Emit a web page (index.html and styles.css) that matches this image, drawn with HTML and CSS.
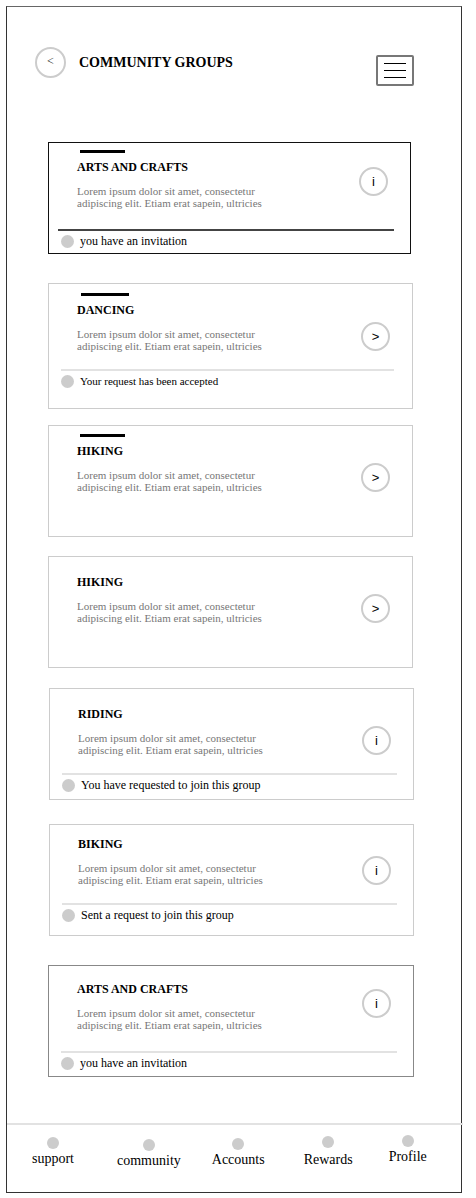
FILE: index.html
```html
<!DOCTYPE html>
<html lang="en">
<head>
    <meta charset="UTF-8">
    <meta name="viewport" content="width=device-width, initial-scale=1.0">
    <title>Community Groups</title>
    <link rel="stylesheet" href="styles.css">
</head>
<body>
    <div class="frame">
        <div class="header">
            <div class="back-btn">&lt;</div>
            <h1 class="page-title">COMMUNITY GROUPS</h1>
            <div class="menu-btn">
                <span></span>
                <span></span>
                <span></span>
            </div>
        </div>

        <div class="group-list">
            <div class="card card-dark">
                <div class="card-main">
                    <div class="card-text">
                        <div class="accent"></div>
                        <h2 class="card-title">ARTS AND CRAFTS</h2>
                        <p class="card-desc">Lorem ipsum dolor sit amet, consectetur<br>adipiscing elit. Etiam erat sapein, ultricies</p>
                    </div>
                    <div class="round-btn btn-high">i</div>
                </div>
                <div class="card-status status-dark">
                    <span class="dot"></span>
                    <span>you have an invitation</span>
                </div>
            </div>

            <div class="card card-tall gap-wide">
                <div class="card-main">
                    <div class="card-text">
                        <div class="accent"></div>
                        <h2 class="card-title">DANCING</h2>
                        <p class="card-desc">Lorem ipsum dolor sit amet, consectetur<br>adipiscing elit. Etiam erat sapein, ultricies</p>
                    </div>
                    <div class="round-btn">&gt;</div>
                </div>
                <div class="card-status status-small">
                    <span class="dot"></span>
                    <span>Your request has been accepted</span>
                </div>
            </div>

            <div class="card gap-tight">
                <div class="card-main">
                    <div class="card-text">
                        <div class="accent"></div>
                        <h2 class="card-title">HIKING</h2>
                        <p class="card-desc">Lorem ipsum dolor sit amet, consectetur<br>adipiscing elit. Etiam erat sapein, ultricies</p>
                    </div>
                    <div class="round-btn">&gt;</div>
                </div>
            </div>

            <div class="card gap-snug">
                <div class="card-main">
                    <div class="card-text">
                        <h2 class="card-title">HIKING</h2>
                        <p class="card-desc">Lorem ipsum dolor sit amet, consectetur<br>adipiscing elit. Etiam erat sapein, ultricies</p>
                    </div>
                    <div class="round-btn">&gt;</div>
                </div>
            </div>

            <div class="card card-shift">
                <div class="card-main">
                    <div class="card-text">
                        <h2 class="card-title">RIDING</h2>
                        <p class="card-desc">Lorem ipsum dolor sit amet, consectetur<br>adipiscing elit. Etiam erat sapein, ultricies</p>
                    </div>
                    <div class="round-btn">i</div>
                </div>
                <div class="card-status">
                    <span class="dot"></span>
                    <span>You have requested to join this group</span>
                </div>
            </div>

            <div class="card card-shift card-compact gap-loose">
                <div class="card-main">
                    <div class="card-text">
                        <h2 class="card-title">BIKING</h2>
                        <p class="card-desc">Lorem ipsum dolor sit amet, consectetur<br>adipiscing elit. Etiam erat sapein, ultricies</p>
                    </div>
                    <div class="round-btn">i</div>
                </div>
                <div class="card-status">
                    <span class="dot"></span>
                    <span>Sent a request to join this group</span>
                </div>
            </div>

            <div class="card card-mid card-shift card-last gap-wide">
                <div class="card-main">
                    <div class="card-text">
                        <h2 class="card-title">ARTS AND CRAFTS</h2>
                        <p class="card-desc">Lorem ipsum dolor sit amet, consectetur<br>adipiscing elit. Etiam erat sapein, ultricies</p>
                    </div>
                    <div class="round-btn btn-high">i</div>
                </div>
                <div class="card-status">
                    <span class="dot"></span>
                    <span>you have an invitation</span>
                </div>
            </div>
        </div>

        <div class="bottom-nav">
            <div class="nav-item nav-support"><span class="dot"></span>support</div>
            <div class="nav-item nav-community"><span class="dot"></span>community</div>
            <div class="nav-item nav-accounts"><span class="dot"></span>Accounts</div>
            <div class="nav-item nav-rewards"><span class="dot"></span>Rewards</div>
            <div class="nav-item nav-profile"><span class="dot"></span>Profile</div>
        </div>
    </div>
</body>
</html>
```

FILE: styles.css
```css
body {
    margin: 0;
    padding: 0;
    font-family: "Liberation Serif", "Times New Roman", serif;
    background-color: #ffffff;
    color: #000000;
}

.frame {
    box-sizing: border-box;
    width: 456px;
    height: 1187px;
    margin: 6px 0 0 6px;
    border: 1px solid #333333;
    border-top-color: #666666;
    display: flex;
    flex-direction: column;
}

/* Header */
.header {
    display: flex;
    align-items: flex-start;
    padding: 40px 0 0 28px;
}

.back-btn {
    box-sizing: border-box;
    width: 31px;
    height: 31px;
    border: 2px solid #cccccc;
    border-radius: 50%;
    display: flex;
    align-items: center;
    justify-content: center;
    font-size: 12px;
    color: #222222;
    padding-bottom: 2px;
}

.page-title {
    margin: 0 0 0 13px;
    font-size: 14px;
    line-height: 31px;
    font-weight: bold;
    flex: 1;
}

.menu-btn {
    box-sizing: border-box;
    width: 38px;
    height: 31px;
    margin: 8px 47px 0 0;
    border: 2px solid #777777;
    border-radius: 2px;
    display: flex;
    flex-direction: column;
    align-items: center;
    justify-content: center;
    gap: 6px;
}

.menu-btn span {
    display: block;
    width: 22px;
    height: 1px;
    background-color: #000000;
}

/* Cards */
.group-list {
    display: flex;
    flex-direction: column;
    padding: 56px 0 0 41px;
}

.card {
    box-sizing: border-box;
    width: 365px;
    height: 112px;
    margin-top: 20px;
    padding-top: 17px;
    border: 1px solid #cccccc;
    display: flex;
    flex-direction: column;
}

.card:first-child {
    margin-top: 0;
    width: 363px;
    padding-top: 16px;
}

.card-dark {
    border-color: #111111;
}

.card-mid {
    border-color: #888888;
}

.card-tall {
    height: 126px;
    padding-top: 18px;
}

.card-shift {
    margin-left: 1px;
}

.card-compact {
    padding-top: 11px;
}

.card-last {
    padding-top: 15px;
    margin-left: 0;
    width: 366px;
}

.gap-wide {
    margin-top: 29px;
}

.gap-tight {
    margin-top: 16px;
}

.gap-snug {
    margin-top: 19px;
}

.gap-loose {
    margin-top: 24px;
}

.card-main {
    display: flex;
    align-items: flex-start;
    justify-content: space-between;
    padding-left: 28px;
}

.accent {
    width: 45px;
    height: 3px;
    margin: -9px 0 6px 3px;
    background-color: #000000;
}

.card-tall .accent {
    width: 48px;
    margin-left: 4px;
}

.card-title {
    margin: 0;
    font-size: 12px;
    line-height: 16px;
    font-weight: bold;
}

.card-desc {
    margin: 10px 0 0 0;
    font-size: 11px;
    line-height: 12px;
    color: #777777;
}

.round-btn {
    box-sizing: border-box;
    width: 29px;
    height: 29px;
    margin: 20px 22px 0 0;
    border: 2px solid #cccccc;
    border-radius: 50%;
    display: flex;
    align-items: center;
    justify-content: center;
    font-family: "Liberation Sans", Arial, sans-serif;
    font-size: 13px;
}

.btn-high {
    margin-top: 8px;
}

.card-status {
    margin: 17px 16px 0 12px;
    padding-top: 3px;
    border-top: 2px solid #e2e2e2;
    display: flex;
    align-items: center;
    gap: 6px;
    font-size: 12px;
    line-height: 14px;
}

.status-dark {
    border-top-color: #444444;
    margin: 20px 16px 0 9px;
    padding-left: 3px;
}

.card-last .card-status {
    margin-top: 20px;
}

.status-small {
    font-size: 11px;
    margin-right: 18px;
}

.dot {
    display: block;
    width: 13px;
    height: 13px;
    border-radius: 50%;
    background-color: #cccccc;
    flex-shrink: 0;
}

/* Bottom navigation */
.bottom-nav {
    margin-top: auto;
    margin-right: -2px;
    height: 67px;
    padding-left: 25px;
    border-top: 2px solid #e2e2e2;
    display: flex;
    align-items: flex-start;
}

.nav-item {
    display: flex;
    flex-direction: column;
    align-items: center;
    gap: 2px;
    padding-top: 12px;
    font-size: 14px;
    line-height: 16px;
}

.nav-item .dot {
    width: 12px;
    height: 12px;
}

.nav-community {
    padding-top: 14px;
    margin-left: 43px;
}

.nav-accounts {
    padding-top: 13px;
    margin-left: 31px;
}

.nav-rewards {
    padding-top: 11px;
    margin-left: 39px;
    gap: 4px;
}

.nav-profile {
    padding-top: 10px;
    margin-left: 36px;
}
```
